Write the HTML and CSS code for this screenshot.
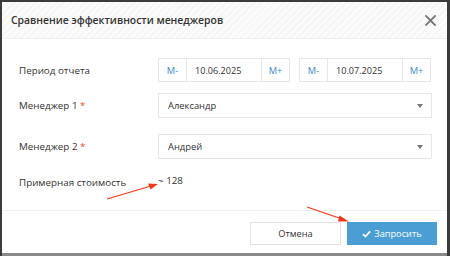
FILE: index.html
```html
<!DOCTYPE html>
<html lang="ru">
<head>
<meta charset="utf-8">
<link rel="stylesheet" href="styles.css">
</head>
<body>
<div class="modal">
  <div class="modal-header">
    <h1 class="modal-title">Сравнение эффективности менеджеров</h1>
    <button class="close" aria-label="Закрыть">
      <svg width="11" height="11" viewBox="0 0 11 11"><path d="M1 1L10 10M10 1L1 10" stroke="#777" stroke-width="1.8" stroke-linecap="square"/></svg>
    </button>
  </div>
  <div class="modal-body">
    <div class="row row-period">
      <label class="lbl">Период отчета</label>
      <div class="controls period">
        <div class="date-group">
          <span class="step">M-</span>
          <span class="date">10.06.2025</span>
          <span class="step">M+</span>
        </div>
        <div class="date-group">
          <span class="step">M-</span>
          <span class="date">10.07.2025</span>
          <span class="step">M+</span>
        </div>
      </div>
    </div>
    <div class="row row-m1">
      <label class="lbl">Менеджер 1 <span class="req">*</span></label>
      <div class="controls">
        <div class="select"><span>Александр</span><span class="caret"></span></div>
      </div>
    </div>
    <div class="row row-m2">
      <label class="lbl">Менеджер 2 <span class="req">*</span></label>
      <div class="controls">
        <div class="select"><span>Андрей</span><span class="caret"></span></div>
      </div>
    </div>
    <div class="row row-cost">
      <label class="lbl">Примерная стоимость</label>
      <div class="controls cost">~ 128</div>
    </div>
  </div>
  <div class="modal-footer">
    <button class="btn btn-default">Отмена</button>
    <button class="btn btn-primary"><svg class="check" width="9" height="8" viewBox="0 0 10 9"><path d="M1 4.6L3.8 7.4L9 1.6" fill="none" stroke="#fff" stroke-width="2"/></svg>Запросить</button>
  </div>
  <svg class="arrows" width="450" height="256" viewBox="0 0 450 256">
    <line x1="107" y1="199" x2="151" y2="186" stroke="#f0391c" stroke-width="1.3"/>
    <polygon points="158,184 148,183.5 150.5,189.5" fill="#f0391c"/>
    <line x1="307" y1="207" x2="342" y2="219" stroke="#f0391c" stroke-width="1.3"/>
    <polygon points="349,221.5 339.5,215.5 338,221.5" fill="#f0391c"/>
  </svg>
</div>
</body>
</html>
```
FILE: styles.css
```css
* { box-sizing: border-box; }
html, body { margin: 0; padding: 0; }
body {
  width: 450px;
  height: 256px;
  background: #3b3b3b;
  font-family: "Open Sans", "Noto Sans", sans-serif;
  color: #333;
  overflow: hidden;
  padding: 2px 3px 0 2px;
}
.modal {
  position: relative;
  background: #fff;
  height: 251px;
  display: flex;
  flex-direction: column;
  border-bottom: 3px solid #8a8a8a;
  box-sizing: content-box;
}
.modal-header {
  height: 37px;
  display: flex;
  align-items: center;
  justify-content: space-between;
  padding: 0 10px 0 9px;
  background: repeating-linear-gradient(-45deg, #f6f6f6 0 2px, #fbfbfb 2px 5px);
  border-bottom: 1px solid #efefef;
}
.modal-title {
  margin: 0;
  font-size: 10.4px;
  font-weight: 600;
  color: #333;
}
.close {
  border: 0;
  background: none;
  padding: 0;
  width: 14px;
  height: 14px;
  display: flex;
  align-items: center;
  justify-content: center;
}
.modal-body {
  padding: 19px 15px 0 17px;
  flex: 1;
}
.row {
  display: flex;
  align-items: center;
}
.row-m1 { margin-top: 11px; }
.row-m2 { margin-top: 16px; }
.row-cost { margin-top: 13px; height: 20px; }
.lbl {
  width: 139px;
  font-size: 9.8px;
  color: #333;
}
.req { color: #e8493b; }
.controls { flex: 1; }
.period {
  display: flex;
  gap: 9px;
}
.date-group {
  display: flex;
  height: 24px;
  border: 1px solid #e6e6e6;
  width: 132px;
}
.step {
  width: 27px;
  display: flex;
  align-items: center;
  justify-content: center;
  font-size: 9.3px;
  color: #3a8cc8;
}
.date {
  flex: 1;
  display: flex;
  align-items: center;
  padding-left: 8px;
  border-left: 1px solid #e6e6e6;
  border-right: 1px solid #e6e6e6;
  font-size: 9.1px;
  color: #333;
}
.select {
  height: 25px;
  border: 1px solid #e6e6e6;
  display: flex;
  align-items: center;
  justify-content: space-between;
  padding: 0 8px 0 9px;
  font-size: 9.4px;
  color: #333;
}
.caret {
  width: 0;
  height: 0;
  border-left: 3px solid transparent;
  border-right: 3px solid transparent;
  border-top: 4px solid #777;
}
.cost {
  font-size: 9.8px;
  margin-top: -3px;
}
.modal-footer {
  margin-top: auto;
  border-top: 1px solid #efefef;
  height: 43px;
  display: flex;
  justify-content: flex-end;
  align-items: flex-start;
  padding: 11px 10px 0 0;
  gap: 6px;
}
.btn {
  height: 23px;
  font-family: inherit;
  font-size: 9.2px;
  border-radius: 0;
  display: flex;
  align-items: center;
  justify-content: center;
  padding: 0;
}
.btn-default {
  width: 91px;
  background: #fff;
  border: 1px solid #e3e3e3;
  color: #333;
}
.btn-primary {
  width: 90px;
  background: #4a9ed3;
  border: 1px solid #4a9ed3;
  color: #fff;
  gap: 3px;
}
.arrows {
  position: absolute;
  left: -2px;
  top: -2px;
  pointer-events: none;
}
```
